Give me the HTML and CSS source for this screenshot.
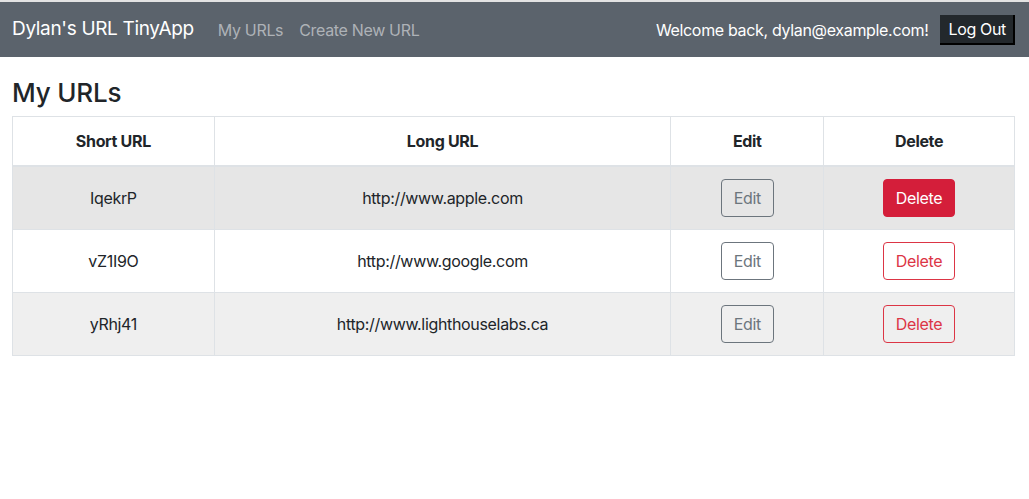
FILE: index.html
```html
<!DOCTYPE html>
<html lang="en">
<head>
<meta charset="utf-8">
<title>TinyApp</title>
<link rel="stylesheet" href="styles.css">
</head>
<body>
<div class="topline"></div>
<nav class="navbar">
  <div class="nav-left">
    <a class="brand" href="#">Dylan's URL TinyApp</a>
    <a class="nav-link" href="#">My URLs</a>
    <a class="nav-link" href="#">Create New URL</a>
  </div>
  <div class="nav-right">
    <span class="welcome">Welcome back, dylan@example.com!</span>
    <button class="logout">Log Out</button>
  </div>
</nav>
<main class="container">
  <h2 class="title">My URLs</h2>
  <table class="urls">
    <thead>
      <tr>
        <th class="c-short">Short URL</th>
        <th class="c-long">Long URL</th>
        <th class="c-edit">Edit</th>
        <th class="c-del">Delete</th>
      </tr>
    </thead>
    <tbody>
      <tr class="hover">
        <td>IqekrP</td>
        <td>http://www.apple.com</td>
        <td><button class="btn btn-edit">Edit</button></td>
        <td><button class="btn btn-del-solid">Delete</button></td>
      </tr>
      <tr>
        <td>vZ1I9O</td>
        <td>http://www.google.com</td>
        <td><button class="btn btn-edit">Edit</button></td>
        <td><button class="btn btn-del">Delete</button></td>
      </tr>
      <tr class="striped">
        <td>yRhj41</td>
        <td>http://www.lighthouselabs.ca</td>
        <td><button class="btn btn-edit">Edit</button></td>
        <td><button class="btn btn-del">Delete</button></td>
      </tr>
    </tbody>
  </table>
</main>
</body>
</html>
```

FILE: styles.css
```css
* { box-sizing: border-box; }
html, body { margin: 0; padding: 0; }
body {
  font-family: Inter, "Noto Sans", "Liberation Sans", sans-serif;
  font-size: 16px;
  line-height: 1.5;
  letter-spacing: -0.33px;
  color: #212529;
  background: #fff;
}
.topline { height: 2px; background: #e3e3e3; }
.navbar {
  height: 55px;
  background: #5b636c;
  display: flex;
  align-items: center;
  justify-content: space-between;
  padding: 0 14px 0 12px;
}
.nav-left, .nav-right { display: flex; align-items: center; }
.brand {
  color: #fff;
  font-size: 19px;
  text-decoration: none;
  margin-right: 24px;
}
.nav-link {
  color: #aeb2b7;
  text-decoration: none;
  margin-right: 16px;
}
.welcome { color: #fff; margin-right: 12px; }
.logout {
  font-family: inherit;
  font-size: 16px;
  letter-spacing: inherit;
  color: #fff;
  background: #23282c;
  border: none;
  border-right: 2px solid #000;
  border-bottom: 2px solid #000;
  padding: 2px 7px 1px 8px;
  height: 30px;
  line-height: 24px;
}
.container { padding: 0 14px 0 12px; }
.title {
  font-size: 26px;
  font-weight: 500;
  line-height: 1.2;
  letter-spacing: -0.2px;
  margin: 20px 0 8px;
}
.urls {
  width: 100%;
  border-collapse: collapse;
  border: 1px solid #dee2e6;
}
.urls th, .urls td {
  border: 1px solid #dee2e6;
  padding: 12px;
  text-align: center;
  vertical-align: middle;
}
.urls th { font-weight: 700; }
.urls thead th { border-bottom: 2px solid #dee2e6; }
.c-short { width: 202px; }
.c-long { width: 457px; }
.c-edit { width: 153px; }
.c-del { width: 191px; }
.hover td { background: #e6e6e6; }
.striped td { background: #efefef; }
.btn {
  font-family: inherit;
  font-size: 16px;
  letter-spacing: inherit;
  line-height: 24px;
  padding: 6px 12px;
  border-radius: 4px;
  border: 1px solid transparent;
  background: transparent;
  height: 38px;
}
.btn-edit { color: #6c757d; border-color: #6c757d; }
.btn-del { color: #dc3545; border-color: #dc3545; }
.btn-del-solid { color: #fff; background: #d41e3a; border-color: #d41e3a; }
```
